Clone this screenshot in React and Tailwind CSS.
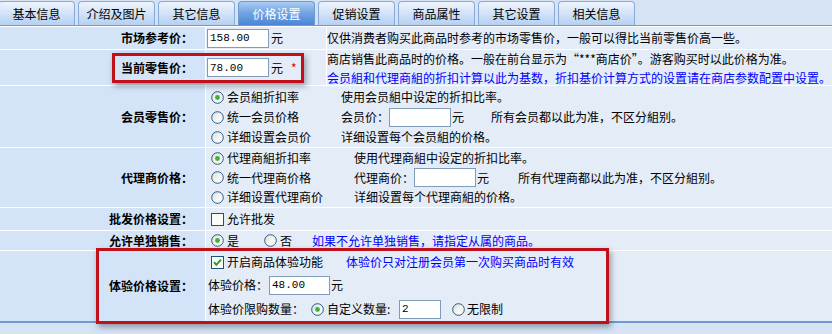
import React from "react";

const Radio = ({ checked }) => (
  <svg width="13" height="13" viewBox="0 0 13 13" className="shrink-0">
    <defs>
      <linearGradient id="rg" x1="0" y1="0" x2="1" y2="1">
        <stop offset="0" stopColor="#d9d9d2" />
        <stop offset="0.5" stopColor="#f4f4f0" />
        <stop offset="1" stopColor="#ffffff" />
      </linearGradient>
    </defs>
    <circle cx="6.5" cy="6.5" r="5.8" fill="url(#rg)" stroke="#2a5a86" strokeWidth="1" />
    {checked && <circle cx="6.5" cy="6.5" r="2.4" fill="#3bb33b" />}
  </svg>
);

const Check = ({ checked }) => (
  <svg width="13" height="13" viewBox="0 0 13 13" className="shrink-0">
    <rect x="0.5" y="0.5" width="12" height="12" fill="#fbfbf8" stroke="#1c5180" />
    {checked && (
      <path d="M3 6.2 L5.3 8.8 L10 3.6" fill="none" stroke="#21a121" strokeWidth="2" />
    )}
  </svg>
);

const Box = ({ value = "", w = "w-[62px]" }) => (
  <div
    className={`${w} h-[19px] border border-[#7f9db9] bg-white pl-[2px] flex items-center text-[11px] font-['Liberation_Mono',monospace] text-black shrink-0`}
  >
    {value}
  </div>
);

const Tab = ({ children, active }) => (
  <div
    className={
      active
        ? "w-[77px] h-[24px] rounded-t-[4px] border border-b-0 border-[#6f9ad3] bg-gradient-to-b from-[#a9cbf2] via-[#6fa2e2] to-[#4a86d6] text-white flex items-center justify-center"
        : "w-[77px] h-[24px] rounded-t-[4px] border border-b-0 border-[#86abdb] bg-gradient-to-b from-[#eef4fd] to-[#b6d0f2] text-black flex items-center justify-center"
    }
  >
    {children}
  </div>
);

const Label = ({ children, cls = "" }) => (
  <div className={`w-[205px] shrink-0 bg-[#d3e4f9] flex items-center justify-end pr-[12px] font-bold ${cls}`}>
    {children}
  </div>
);

export default function App() {
  return (
    <div className="w-[832px] h-[334px] bg-[#d5e3f5] relative overflow-hidden font-['Noto_Sans_CJK_SC',sans-serif] text-[12px] text-black leading-[20px] whitespace-nowrap">
      {/* tabs */}
      <div className="h-[26px] pt-[1px] flex items-end gap-[3px] ml-[-2px] border-b border-[#6b9bd1]">
        <Tab>基本信息</Tab>
        <Tab>介绍及图片</Tab>
        <Tab>其它信息</Tab>
        <Tab active>价格设置</Tab>
        <Tab>促销设置</Tab>
        <Tab>商品属性</Tab>
        <Tab>其它设置</Tab>
        <Tab>相关信息</Tab>
      </div>

      <div className="border-t border-white flex flex-col">
        {/* row 1 */}
        <div className="h-[23px] flex border-b border-white">
          <Label>市场参考价：</Label>
          <div className="w-[121px] shrink-0 bg-[#e3ecf7] border-l border-white pl-[1px] flex items-center gap-[2px]">
            <Box value="158.00" />
            <span>元</span>
          </div>
          <div className="flex-1 bg-[#e3ecf7] border-l border-white flex items-center">
            仅供消费者购买此商品时参考的市场零售价，一般可以得比当前零售价高一些。
          </div>
        </div>

        {/* row 2 */}
        <div className="h-[36px] flex border-b border-white">
          <Label>当前零售价：</Label>
          <div className="w-[121px] shrink-0 bg-[#e3ecf7] border-l border-white pl-[1px] flex items-center gap-[2px]">
            <Box value="78.00" />
            <span>元</span>
            <span className="text-[#e00000] ml-[6px]">*</span>
          </div>
          <div className="flex-1 min-w-0 bg-[#e3ecf7] border-l border-white flex flex-col justify-center leading-[19px] overflow-visible">
            <div>商店销售此商品时的价格。一般在前台显示为“***商店价”。游客购买时以此价格为准。</div>
            <div className="text-[#0000ff]">会员組和代理商組的折扣计算以此为基数，折扣基价计算方式的设置请在商店参数配置中设置。</div>
          </div>
        </div>

        {/* row 3 */}
        <div className="h-[62px] flex border-b border-white">
          <Label>会员零售价：</Label>
          <div className="flex-1 bg-[#e3ecf7] border-l border-white pl-[5px] pt-[1px] flex flex-col">
            <div className="h-[20px] flex items-center">
              <div className="w-[130px] flex items-center gap-[3px]"><Radio checked /><span>会员組折扣率</span></div>
              <span>使用会员組中设定的折扣比率。</span>
            </div>
            <div className="h-[20px] flex items-center">
              <div className="w-[130px] flex items-center gap-[3px]"><Radio /><span>统一会员价格</span></div>
              <span className="w-[48px]">会员价：</span>
              <Box />
              <span className="w-[40px] pl-[1px]">元</span>
              <span>所有会员都以此为准，不区分組别。</span>
            </div>
            <div className="h-[20px] flex items-center">
              <div className="w-[130px] flex items-center gap-[3px]"><Radio /><span>详细设置会员价</span></div>
              <span>详细设置每个会员組的价格。</span>
            </div>
          </div>
        </div>

        {/* row 4 */}
        <div className="h-[60px] flex border-b border-white">
          <Label>代理商价格：</Label>
          <div className="flex-1 bg-[#e3ecf7] border-l border-white pl-[5px] flex flex-col">
            <div className="h-[20px] flex items-center">
              <div className="w-[143px] flex items-center gap-[3px]"><Radio checked /><span>代理商組折扣率</span></div>
              <span>使用代理商組中设定的折扣比率。</span>
            </div>
            <div className="h-[19px] flex items-center">
              <div className="w-[143px] flex items-center gap-[3px]"><Radio /><span>统一代理商价格</span></div>
              <span className="w-[60px]">代理商价：</span>
              <Box />
              <span className="w-[42px] pl-[1px]">元</span>
              <span>所有代理商都以此为准，不区分組别。</span>
            </div>
            <div className="h-[20px] flex items-center">
              <div className="w-[143px] flex items-center gap-[3px]"><Radio /><span>详细设置代理商价</span></div>
              <span>详细设置每个代理商組的价格。</span>
            </div>
          </div>
        </div>

        {/* row 5 */}
        <div className="h-[23px] flex border-b border-white">
          <Label>批发价格设置：</Label>
          <div className="flex-1 bg-[#e3ecf7] border-l border-white pl-[5px] flex items-center gap-[3px]">
            <Check />
            <span>允许批发</span>
          </div>
        </div>

        {/* row 6 */}
        <div className="h-[20px] flex border-b border-white">
          <Label>允许单独销售：</Label>
          <div className="flex-1 bg-[#e3ecf7] border-l border-white pl-[5px] flex items-center">
            <Radio checked />
            <span className="ml-[3px] w-[37px]">是</span>
            <Radio />
            <span className="ml-[3px] w-[32px]">否</span>
            <span className="text-[#0000ff]">如果不允许单独销售，请指定从属的商品。</span>
          </div>
        </div>

        {/* row 7 */}
        <div className="h-[72px] flex border-b-2 border-[#6b9bd1]">
          <Label>体验价格设置：</Label>
          <div className="flex-1 bg-[#e3ecf7] border-l border-white pl-[2px] pt-[1px] flex flex-col">
            <div className="h-[20px] flex items-center pl-[3px]">
              <div className="w-[135px] flex items-center gap-[3px]"><Check checked /><span>开启商品体验功能</span></div>
              <span className="text-[#0000ff]">体验价只对注册会员第一次购买商品时有效</span>
            </div>
            <div className="h-[26px] flex items-center">
              <span className="w-[61px]">体验价格：</span>
              <Box value="48.00" w="w-[61px]" />
              <span className="pl-[1px]">元</span>
            </div>
            <div className="h-[22px] flex items-center">
              <span className="w-[103px]">体验价限购数量：</span>
              <Radio checked />
              <span className="ml-[3px] w-[72px]">自定义数量:</span>
              <Box value="2" w="w-[42px]" />
              <span className="w-[11px]" />
              <Radio />
              <span className="ml-[2px]">无限制</span>
            </div>
          </div>
        </div>
      </div>

      {/* red highlight boxes */}
      <div className="absolute left-[112px] top-[53px] w-[192px] h-[30px] border-[3px] border-[#c0101a] shadow-[2px_3px_6px_rgba(0,0,0,0.35)] pointer-events-none" />
      <div className="absolute left-[96px] top-[248px] w-[513px] h-[76px] border-[3px] border-[#c0101a] shadow-[2px_3px_6px_rgba(0,0,0,0.35)] pointer-events-none" />
    </div>
  );
}
